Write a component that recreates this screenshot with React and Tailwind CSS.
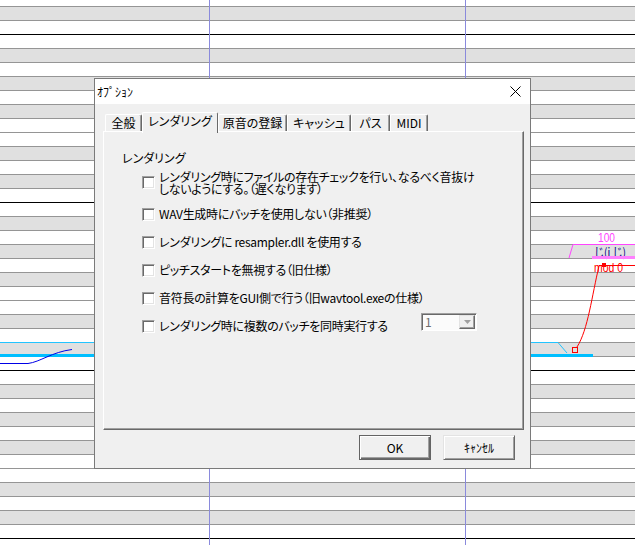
import React from 'react'

// piano roll rows, top to bottom starting at C#
const KEYS = ['g', 'w', 'w', 'g', 'w', 'g', 'w', 'g', 'w', 'w', 'g', 'w']

const OPTIONS = [
  ['レンダリング時にファイルの存在チェックを行い、なるべく音抜け', 'しないようにする。（遅くなります）'],
  ['WAV生成時にバッチを使用しない（非推奨）'],
  ['レンダリングに resampler.dll を使用する'],
  ['ピッチスタートを無視する（旧仕様）'],
  ['音符長の計算をGUI側で行う（旧wavtool.exeの仕様）'],
]

const TABS = [
  { label: '全般', w: 'w-[37px]' },
  { label: 'レンダリング', w: 'w-[76px]', active: true },
  { label: '原音の登録', w: 'w-[69px]' },
  { label: 'キャッシュ', w: 'w-[64px]' },
  { label: 'パス', w: 'w-[39px]' },
  { label: 'MIDI', w: 'w-[38px]' },
]

function PianoRoll() {
  const rows = Array.from({ length: 39 }, (_, k) => k)
  return (
    <div className="flex flex-col">
      <div className="h-[7px] bg-white border-b border-[#959595]" />
      {rows.map((k) => (
        <div
          key={k}
          className={`h-[14px] border-b ${KEYS[k % 12] === 'g' ? 'bg-[#e0e0e0]' : 'bg-white'} ${k % 12 === 1 ? 'border-black' : 'border-[#959595]'}`}
        />
      ))}
    </div>
  )
}

function Overlay() {
  return (
    <svg className="absolute inset-0 pointer-events-none" width="635" height="545" viewBox="0 0 635 545">
      <line x1="209.5" y1="0" x2="209.5" y2="545" stroke="#8a8adc" />
      <line x1="465.5" y1="0" x2="465.5" y2="545" stroke="#8a8adc" />

      {/* note on the left */}
      <line x1="0" y1="342.5" x2="94" y2="342.5" stroke="#22c4ff" />
      <rect x="0" y="354" width="94" height="3" fill="#00bfff" />
      <path d="M0 363.5 L28 363.5 C40 362 52 352 72 349.5" fill="none" stroke="#0000e6" />

      {/* note on the right */}
      <line x1="530" y1="342.5" x2="558" y2="342.5" stroke="#22c4ff" />
      <line x1="558" y1="342.5" x2="567" y2="353" stroke="#22c4ff" />
      <rect x="530" y="354" width="63" height="3" fill="#00bfff" />

      <text x="598" y="242" fontSize="12" fill="#ff44ff" textLength="17" lengthAdjust="spacingAndGlyphs" fontFamily="Liberation Sans, sans-serif">100</text>
      <line x1="573" y1="244.5" x2="635" y2="244.5" stroke="#ff44ff" />
      <line x1="573" y1="244.5" x2="569" y2="258" stroke="#ff44ff" />
      <text x="594" y="256.5" fontSize="12" fill="#000080" textLength="32" lengthAdjust="spacingAndGlyphs" fontFamily="Noto Sans CJK JP, sans-serif">じ(i じ)</text>
      <rect x="592" y="256" width="43" height="3" fill="#ff80ff" />

      <text x="594" y="272" fontSize="12" fill="#ff0000" textLength="29" lengthAdjust="spacingAndGlyphs" fontFamily="Liberation Sans, sans-serif">mod 0</text>
      <line x1="599" y1="265.5" x2="635" y2="265.5" stroke="#ff0000" />
      <rect x="602" y="263" width="4" height="4" fill="#ff0000" />
      <path d="M599 266 C592 295 588 330 577 347" fill="none" stroke="#ff0000" />
      <rect x="572.5" y="347.5" width="5" height="5" fill="none" stroke="#ff0000" />
    </svg>
  )
}

function Checkbox() {
  return (
    <div className="w-[13px] h-[13px] shrink-0 bg-white border border-t-[#a0a0a0] border-l-[#a0a0a0] border-b-white border-r-white shadow-[inset_1px_1px_0_#696969,inset_-1px_-1px_0_#e3e3e3]" />
  )
}

function Dialog() {
  return (
    <div className="absolute left-[94px] top-[78px] w-[437px] h-[391px] border border-[#7a7a7a] flex flex-col bg-[#f0f0f0] text-black text-[12px] [font-feature-settings:'palt']">
      <div className="h-[25px] bg-white flex items-center justify-between pl-[2px] pr-[9px]">
        <span className="leading-[12px]">ｵﾌﾟｼｮﾝ</span>
        <svg width="11" height="11" viewBox="0 0 11 11">
          <path d="M0.5 0.5 L10.5 10.5 M10.5 0.5 L0.5 10.5" stroke="#000" strokeWidth="1" />
        </svg>
      </div>

      <div className="flex-1 flex flex-col pt-[8px] pl-[8px] pr-[6px]">
        <div className="flex items-end h-[19px] pl-[2px]">
          {TABS.map((t) =>
            t.active ? (
              <div
                key={t.label}
                className={`${t.w} h-[21px] -mb-[2px] relative z-10 flex items-start justify-center pt-[1px] bg-[#f0f0f0] border-l border-t border-white border-r border-r-[#696969] rounded-t-[2px] leading-[14px]`}
              >
                {t.label}
              </div>
            ) : (
              <div
                key={t.label}
                className={`${t.w} h-[17px] flex items-center justify-center bg-[#f0f0f0] border-l border-t border-white border-r border-r-[#696969] shadow-[inset_-1px_0_0_#a0a0a0] rounded-t-[2px] leading-[14px]`}
              >
                {t.label}
              </div>
            )
          )}
        </div>

        <div className="h-[299px] w-[421px] flex flex-col border border-t-white border-l-white border-r-[#696969] border-b-[#696969] shadow-[inset_-1px_-1px_0_#a0a0a0] pt-[19px] pl-[18px]">
          <div className="leading-[13px]">レンダリング</div>
          <div className="flex flex-col mt-[5px] pl-[20px] tracking-[-0.3px]">
            {OPTIONS.map((lines, i) => (
              <div key={i} className={`flex items-center gap-[4px] ${i === 0 ? 'h-[27px] mb-[4px]' : 'h-[28px]'}`}>
                <Checkbox />
                <div className="flex flex-col leading-[12px]">
                  {lines.map((l) => (
                    <span key={l}>{l}</span>
                  ))}
                </div>
              </div>
            ))}
            <div className="flex items-center gap-[4px] h-[28px]">
              <Checkbox />
              <div className="w-[258px] leading-[12px]">レンダリング時に複数のバッチを同時実行する</div>
              <div className="self-start mt-[1px] w-[56px] h-[18px] flex items-center justify-between bg-[#fbfbfb] border border-t-[#a0a0a0] border-l-[#a0a0a0] border-b-white border-r-white shadow-[inset_1px_1px_0_#696969] pl-[3px] pr-[1px]">
                <span className="text-[#6d6d6d] leading-[12px]">1</span>
                <div className="w-[16px] h-[14px] flex items-center justify-center bg-[#f0f0f0] border border-t-[#e3e3e3] border-l-[#e3e3e3] border-b-[#696969] border-r-[#696969] shadow-[inset_-1px_-1px_0_#a0a0a0]">
                  <svg width="7" height="4" viewBox="0 0 7 4">
                    <path d="M0 0 H7 L3.5 4 Z" fill="#a0a0a0" />
                  </svg>
                </div>
              </div>
            </div>
          </div>
        </div>

        <div className="flex justify-end gap-[12px] mt-[5px] pr-[9px]">
          <button className="w-[72px] h-[25px] flex items-center justify-center bg-[#f0f0f0] border border-[#646464] shadow-[inset_1px_1px_0_#fff,inset_-1px_-1px_0_#696969,inset_-2px_-2px_0_#a0a0a0] leading-[12px]">
            OK
          </button>
          <button className="w-[72px] h-[25px] flex items-center justify-center bg-[#f0f0f0] border border-t-[#e3e3e3] border-l-[#e3e3e3] border-b-[#696969] border-r-[#696969] shadow-[inset_1px_1px_0_#fff,inset_-1px_-1px_0_#a0a0a0] leading-[12px]">
            ｷｬﾝｾﾙ
          </button>
        </div>
      </div>
    </div>
  )
}

export default function App() {
  return (
    <div className="relative w-[635px] h-[545px] overflow-hidden bg-white font-['Noto_Sans_CJK_JP','Liberation_Sans',sans-serif]">
      <PianoRoll />
      <Overlay />
      <Dialog />
    </div>
  )
}
